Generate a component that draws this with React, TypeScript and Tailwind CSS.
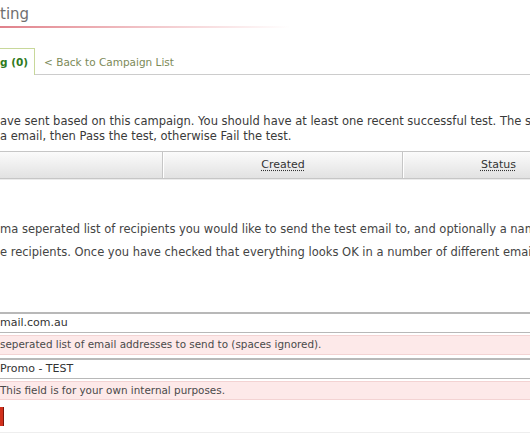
import React from "react";

const font = { fontFamily: '"DejaVu Sans", Verdana, sans-serif' };

export default function App() {
  return (
    <div className="w-[530px] h-[443px] overflow-hidden bg-white relative" style={font}>
      {/* Title */}
      <div className="h-[26px] pt-[5px] text-[15px] leading-[18px] text-[#707070] whitespace-nowrap">ting</div>
      <div className="h-[2px] w-[290px] bg-gradient-to-r from-[#e0818b] via-[#f1c4c8] to-[#ffffff]" />

      {/* Tabs */}
      <div className="mt-[20px] flex h-[27px]">
        <div className="flex items-center pt-[2px] border-t border-r border-[#c8d89a] bg-white pr-[6px] text-[10.5px] font-bold text-[#2f7a1c] whitespace-nowrap">
          g (0)
        </div>
        <div className="flex-1 flex items-center pt-[3px] border-b border-[#cccccc] pl-[9px] text-[10.5px] text-[#7c8a58] whitespace-nowrap">
          &lt; Back to Campaign List
        </div>
      </div>

      {/* Paragraph 1 */}
      <div className="mt-[39px] text-[11.5px] leading-[15px] text-[#3a3a3a] whitespace-nowrap">
        <div>ave sent based on this campaign. You should have at least one recent successful test. The system will</div>
        <div>a email, then Pass the test, otherwise Fail the test.</div>
      </div>

      {/* Table header */}
      <div className="mt-[7px] flex h-[28px] border-t border-b border-[#c6c6c6] bg-gradient-to-b from-[#fbfbfb] to-[#e2e2e2] text-[11px] text-[#333333] whitespace-nowrap">
        <div className="w-[163px] shrink-0 border-r border-[#c6c6c6]" />
        <div className="w-[240px] shrink-0 flex items-center justify-center border-r border-[#c6c6c6] border-l border-l-white">
          <span className="underline decoration-dotted underline-offset-2">Created</span>
        </div>
        <div className="w-[190px] shrink-0 flex items-center justify-center border-l border-l-white">
          <span className="underline decoration-dotted underline-offset-2">Status</span>
        </div>
      </div>
      <div className="h-px bg-[#ececec]" />

      {/* Paragraph 2 */}
      <div className="mt-[38px] text-[11.5px] leading-[23px] text-[#444444] whitespace-nowrap">
        <div>ma seperated list of recipients you would like to send the test email to, and optionally a name for each of</div>
        <div>e recipients. Once you have checked that everything looks OK in a number of different email clients, you</div>
      </div>

      {/* Form */}
      <div className="mt-[48px] flex flex-col">
        <div className="h-[21px] w-[600px] flex items-center border-t-2 border-b border-[#b8b8b8] bg-white text-[11px] text-[#333333] whitespace-nowrap">
          mail.com.au
        </div>
        <div className="mt-[2px] h-[20px] w-[600px] flex items-center border-t border-b border-[#f3d3d3] bg-[#fde9e9] text-[10.4px] text-[#4a4a4a] whitespace-nowrap">
          seperated list of email addresses to send to (spaces ignored).
        </div>
        <div className="mt-[3px] h-[21px] w-[600px] flex items-center border-t-2 border-b border-[#b8b8b8] bg-white text-[11px] text-[#333333] whitespace-nowrap">
          Promo - TEST
        </div>
        <div className="mt-[2px] h-[19px] w-[600px] flex items-center border-t border-b border-[#f3d3d3] bg-[#fde9e9] text-[10.4px] text-[#4a4a4a] whitespace-nowrap">
          This field is for your own internal purposes.
        </div>
        <div className="mt-[7px] h-[19px] w-[4px] bg-[#d1301c] border-r border-[#7c160c]" />
        <div className="mt-[6px] h-px w-[600px] bg-[#eeeeee]" />
      </div>
    </div>
  );
}
